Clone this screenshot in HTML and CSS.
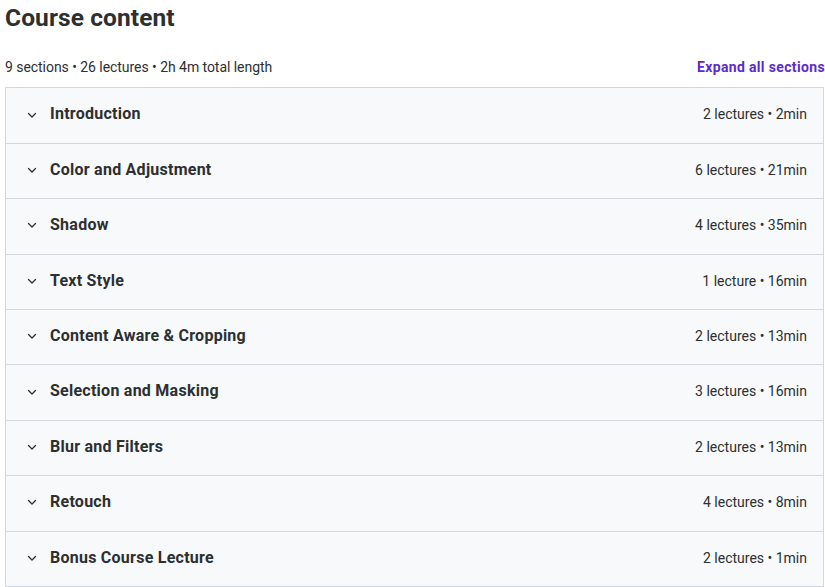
FILE: index.html
```html
<!DOCTYPE html>
<html lang="en">
  <head>
    <meta charset="UTF-8" />
    <title>Course content</title>
    <link rel="stylesheet" href="styles.css">
  </head>
  <body>
    <div class="course-content">
      <h2 class="heading">Course content</h2>

      <div class="summary-bar">
        <span class="summary">9 sections • 26 lectures • 2h 4m total length</span>
        <button class="expand-btn">Expand all sections</button>
      </div>

      <div class="accordion">
        <div class="section-row">
          <span class="chevron"><svg viewBox="0 0 16 16"><path d="M4.5 6.5 8 10l3.5-3.5" /></svg></span>
          <span class="section-title">Introduction</span>
          <span class="section-meta">2 lectures • 2min</span>
        </div>
        <div class="section-row">
          <span class="chevron"><svg viewBox="0 0 16 16"><path d="M4.5 6.5 8 10l3.5-3.5" /></svg></span>
          <span class="section-title">Color and Adjustment</span>
          <span class="section-meta">6 lectures • 21min</span>
        </div>
        <div class="section-row">
          <span class="chevron"><svg viewBox="0 0 16 16"><path d="M4.5 6.5 8 10l3.5-3.5" /></svg></span>
          <span class="section-title">Shadow</span>
          <span class="section-meta">4 lectures • 35min</span>
        </div>
        <div class="section-row">
          <span class="chevron"><svg viewBox="0 0 16 16"><path d="M4.5 6.5 8 10l3.5-3.5" /></svg></span>
          <span class="section-title">Text Style</span>
          <span class="section-meta">1 lecture • 16min</span>
        </div>
        <div class="section-row">
          <span class="chevron"><svg viewBox="0 0 16 16"><path d="M4.5 6.5 8 10l3.5-3.5" /></svg></span>
          <span class="section-title">Content Aware &amp; Cropping</span>
          <span class="section-meta">2 lectures • 13min</span>
        </div>
        <div class="section-row">
          <span class="chevron"><svg viewBox="0 0 16 16"><path d="M4.5 6.5 8 10l3.5-3.5" /></svg></span>
          <span class="section-title">Selection and Masking</span>
          <span class="section-meta">3 lectures • 16min</span>
        </div>
        <div class="section-row">
          <span class="chevron"><svg viewBox="0 0 16 16"><path d="M4.5 6.5 8 10l3.5-3.5" /></svg></span>
          <span class="section-title">Blur and Filters</span>
          <span class="section-meta">2 lectures • 13min</span>
        </div>
        <div class="section-row">
          <span class="chevron"><svg viewBox="0 0 16 16"><path d="M4.5 6.5 8 10l3.5-3.5" /></svg></span>
          <span class="section-title">Retouch</span>
          <span class="section-meta">4 lectures • 8min</span>
        </div>
        <div class="section-row">
          <span class="chevron"><svg viewBox="0 0 16 16"><path d="M4.5 6.5 8 10l3.5-3.5" /></svg></span>
          <span class="section-title">Bonus Course Lecture</span>
          <span class="section-meta">2 lectures • 1min</span>
        </div>
      </div>
    </div>
  </body>
</html>
```

FILE: styles.css
```css
:root {
  --text: #2d2f31;
  --border: #d1d7dc;
  --row-bg: #f7f9fa;
  --purple: #5b2bcc;
}

* {
  margin: 0;
  padding: 0;
  box-sizing: border-box;
}

body {
  font-family: Roboto, "Noto Sans", sans-serif;
  color: var(--text);
  background: #fff;
  overflow: hidden;
}

.course-content {
  padding: 3px 0 0 5px;
  width: 825px;
}

.heading {
  font-size: 24.5px;
  font-weight: 700;
  line-height: 1.2;
  letter-spacing: 0.1px;
}

/* summary line */
.summary-bar {
  display: flex;
  justify-content: space-between;
  align-items: center;
  margin-top: 25px;
  height: 20px;
  margin-bottom: 10px;
}

.summary {
  font-size: 14px;
  font-weight: 400;
  letter-spacing: -0.05px;
}

.expand-btn {
  background: none;
  border: none;
  font-family: inherit;
  font-size: 14px;
  font-weight: 700;
  letter-spacing: 0.35px;
  color: var(--purple);
  cursor: pointer;
}

/* sections */
.accordion {
  width: 819px;
  border: 1px solid var(--border);
  border-bottom: none;
}

.section-row {
  display: flex;
  align-items: center;
  padding: 15px 16px 17px 18px;
  background: var(--row-bg);
  border-bottom: 1px solid var(--border);
  line-height: 22.4px;
}

.chevron {
  width: 16px;
  height: 16px;
  display: flex;
  margin-right: 10px;
}

.chevron svg {
  width: 16px;
  height: 16px;
  fill: none;
  stroke: var(--text);
  stroke-width: 1.3;
  stroke-linecap: round;
  stroke-linejoin: round;
}

.section-title {
  flex: 1;
  font-size: 16px;
  font-weight: 700;
  letter-spacing: 0.25px;
}

.section-meta {
  font-size: 14px;
  font-weight: 400;
}
```
